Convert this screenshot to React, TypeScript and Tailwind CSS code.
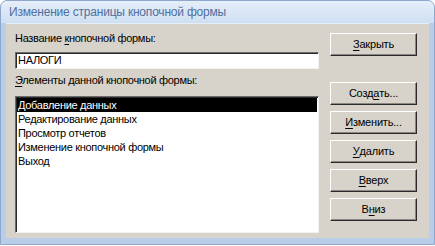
const font = { fontFamily: '"Liberation Sans", Arial, sans-serif' };

const Key = ({ children }: { children: string }) => <span className="underline underline-offset-2">{children}</span>;

const Btn = ({ children }: { children: React.ReactNode }) => (
  <button
    type="button"
    className="h-[23px] w-[87px] bg-[#d7d3ca] text-[11px] tracking-[-0.2px] text-black border border-t-white border-l-white border-r-[#2a2a2a] border-b-[#2a2a2a] shadow-[inset_-1px_-1px_0_#8a8780] flex items-center justify-center"
  >
    {children}
  </button>
);

const items = [
  "Добавление данных",
  "Редактирование данных",
  "Просмотр отчетов",
  "Изменение кнопочной формы",
  "Выход",
];

export default function App() {
  return (
    <div className="w-[435px] h-[246px] bg-white" style={font}>
      <div className="w-[435px] h-[245px] rounded-t-[7px] bg-[#b9cde8] flex flex-col px-[5px] pb-[6px] border border-[#8ea8cc]">
        <div className="h-[22px] flex items-center text-[12px] tracking-[-0.2px] text-[#4f6f9d] bg-gradient-to-b from-[#e6eef9] to-[#cfdff2] -mx-[5px] px-[8px] rounded-t-[6px]">
          Изменение страницы кнопочной формы
        </div>
        <div className="flex-1 bg-[#d7d3ca] flex flex-row pl-[9px] pr-[11px] pt-[7px] border-t border-[#e8eef7]">
          <div className="w-[304px] flex flex-col text-[11px] tracking-[-0.3px] text-black">
            <div className="h-[14px] leading-[14px]">
              Название <Key>к</Key>нопочной формы:
            </div>
            <div className="mt-[7px] h-[17px] bg-white border border-t-[#6b6b6b] border-l-[#6b6b6b] border-b-[#f2f2f2] border-r-[#f2f2f2] shadow-[inset_1px_1px_0_#2a2a2a] flex items-center pl-[2px] leading-[13px]">
              НАЛОГИ
            </div>
            <div className="mt-[4px] h-[14px] leading-[14px]">
              <Key>Э</Key>лементы данной кнопочной формы:
            </div>
            <div className="mt-[9px] h-[137px] bg-white border border-t-[#6b6b6b] border-l-[#6b6b6b] border-b-[#f2f2f2] border-r-[#f2f2f2] shadow-[inset_1px_1px_0_#2a2a2a] pt-[1px] pl-[1px] pr-[1px]">
              {items.map((t, i) => (
                <div
                  key={t}
                  className={`h-[14px] leading-[14px] pl-[1px] ${i === 0 ? "bg-black text-white" : "text-black"}`}
                >
                  {t}
                </div>
              ))}
            </div>
          </div>
          <div className="ml-[11px] flex flex-col pt-[2px]">
            <Btn>
              <Key>З</Key>акрыть
            </Btn>
            <div className="mt-[26px] flex flex-col gap-[6px]">
              <Btn>
                Созд<Key>а</Key>ть...
              </Btn>
              <Btn>
                <Key>И</Key>зменить...
              </Btn>
              <Btn>
                <Key>У</Key>далить
              </Btn>
              <Btn>
                <Key>В</Key>верх
              </Btn>
              <Btn>
                В<Key>н</Key>из
              </Btn>
            </div>
          </div>
        </div>
      </div>
    </div>
  );
}
